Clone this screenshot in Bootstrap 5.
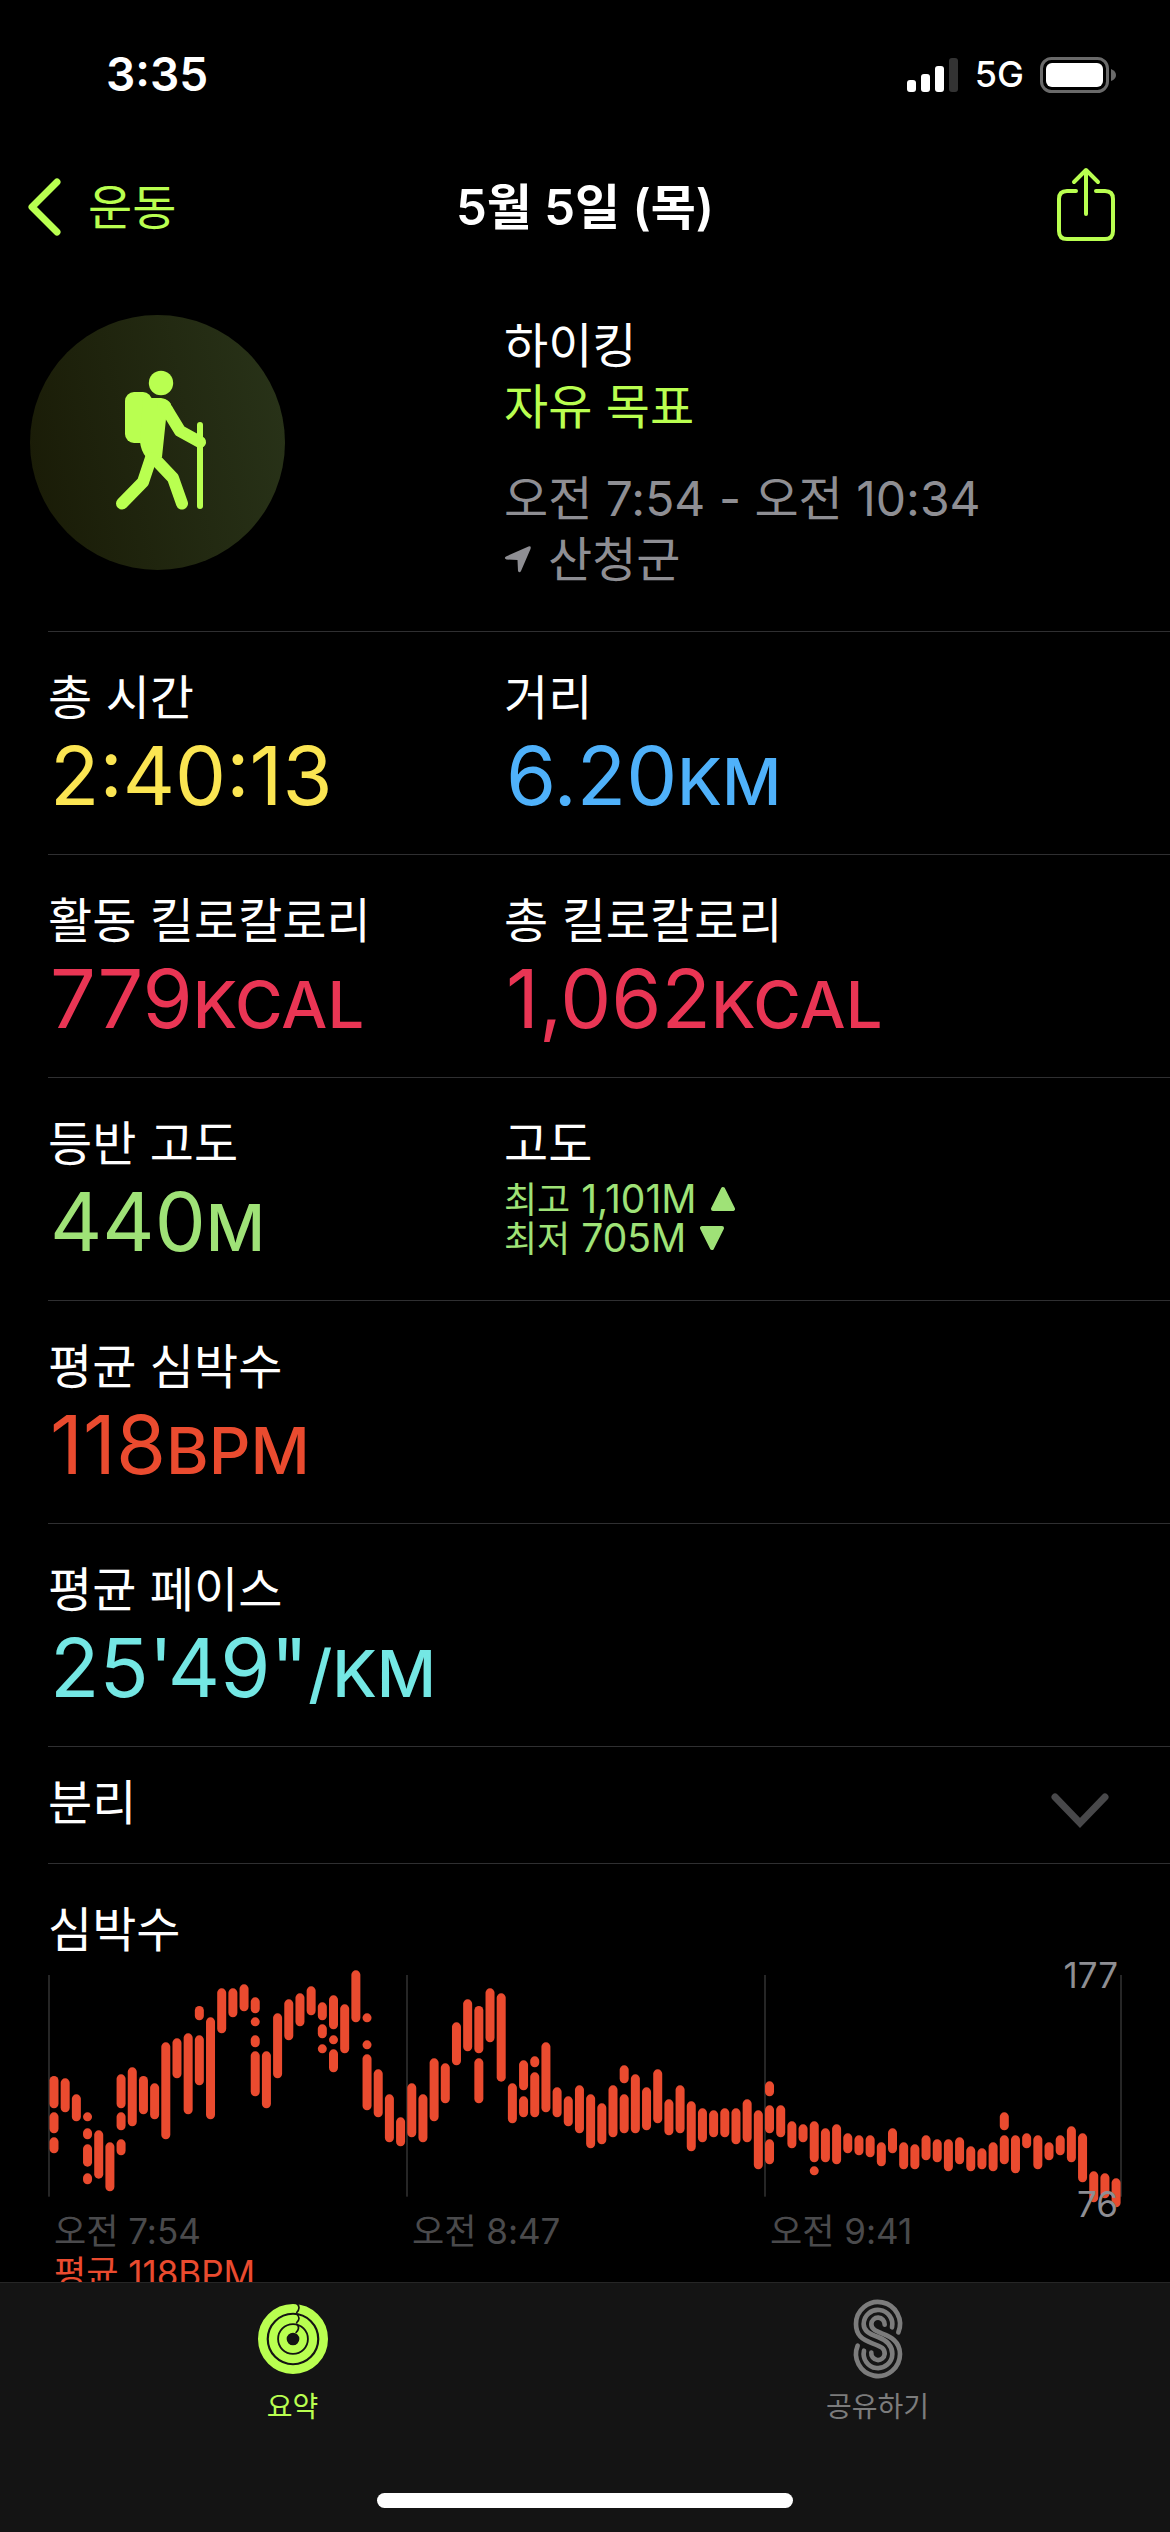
<!DOCTYPE html>
<html lang="ko" data-bs-theme="dark">
<head>
<meta charset="utf-8">
<meta name="viewport" content="width=device-width, initial-scale=1">
<title>운동 요약</title>
<link rel="stylesheet" href="https://cdn.jsdelivr.net/npm/bootstrap@5.3.0/dist/css/bootstrap.min.css">
<style>
  :root { --lime: #b9ff50; --line: #2f2f31; --dim: #8e8e93; --heart: #ea4b2f; }
  body { background: #000; color: #fff; font-family: Inter, "Noto Sans CJK KR", sans-serif; font-size: 48px; line-height: 61px; }
  svg { display: block; flex: none; }
  .lime { color: var(--lime); }
  .dim { color: var(--dim); }
  .status-bar { height: 141px; padding: 8px 54px 0 106px; }
  .clock { font-size: 46px; font-weight: 600; }
  .network { font-size: 36px; font-weight: 500; }
  .top-nav { display: grid; grid-template-columns: 1fr auto 1fr; align-items: center; height: 132px; padding: 0 26px; }
  .top-nav h1 { font-size: 49px; font-weight: 600; line-height: 61px; margin: 0; }
  .top-nav a { color: var(--lime); gap: 26px; }
  .top-nav .btn { margin: 0 27px 4px auto; }
  .summary-head { display: grid; grid-template-columns: 474px 1fr; padding: 42px 0 41px 30px; }
  .when { margin-top: 31px; }
  .place { gap: 17px; }
  .stat-row { display: grid; grid-template-columns: 456px 1fr; margin-left: 48px; border-top: 1px solid var(--line); padding: 35px 0 30px; }
  .stat-row h2, .splits, .chart-box h2 { font-size: 48px; font-weight: 400; line-height: 61px; margin: 0; }
  .figure-val { font-size: 81px; line-height: 96px; margin: 0; padding-left: 2px; }
  .figure-val span { font-size: 65px; font-weight: 500; line-height: 1; }
  .c-time { color: #fbe552; } .c-dist { color: #4fb1fa; } .c-kcal { color: #e93554; }
  .c-climb { color: #9fe277; } .c-heart { color: var(--heart); } .c-pace { color: #74e7e4; }
  .range { font-size: 39px; line-height: 39px; padding-top: 5px; }
  .range p { gap: 14px; margin: 0; }
  .range span { font-size: 36px; line-height: 1; }
  .splits-row { margin-left: 48px; border-top: 1px solid var(--line); }
  .splits { color: #fff; padding: 25px 60px 30px 0; }
  .chart-box { margin-left: 48px; border-top: 1px solid var(--line); padding: 35px 48px 238px 0; }
  .plot { margin-top: 10px; }
  .plot svg { width: 100%; height: auto; }
  .small-txt { font-size: 35px; line-height: 42px; }
  .peak, .trough { position: absolute; right: 4px; color: var(--dim); }
  .peak { top: -16px; }
  .trough { bottom: -15px; }
  .ticks { display: grid; grid-template-columns: repeat(3, 1fr); color: #4a4a4c; }
  .ticks span, .average { padding-left: 6px; }
  .tab-bar { background: #141414; border-top: 1px solid #262626; height: 250px; }
  .tab-bar a { color: #7c7c7c; font-size: 28px; line-height: 34px; padding-top: 14px; }
  .tab-bar a svg { margin-bottom: 9px; }
  .tab-bar a.lime { color: var(--lime); }
  .home-line { width: 416px; height: 15px; background: #fff; margin: 0 auto 24px; }
</style>
<script src="https://cdn.jsdelivr.net/npm/bootstrap@5.3.0/dist/js/bootstrap.bundle.min.js"></script>
</head>
<body>
<header>
  <div class="status-bar d-flex align-items-center justify-content-between">
    <span class="clock">3:35</span>
    <div class="d-flex align-items-center">
      <svg width="52" height="36" viewBox="0 0 52 36" fill="#fff"><rect y="23" width="9" height="12" rx="3"/><rect x="14" y="17" width="9" height="18" rx="3"/><rect x="28" y="9" width="9" height="26" rx="3"/><rect x="42" y="1" width="9" height="34" rx="3" fill="#333"/></svg>
      <span class="network ms-3 me-3">5G</span>
      <svg width="76" height="38" viewBox="0 0 76 38"><rect x="1.5" y="2.5" width="66" height="33" rx="10" fill="none" stroke="#6a6a6a" stroke-width="3"/><rect x="6" y="7" width="57" height="24" rx="6" fill="#fff"/><path d="M71 13q5 2 5 6t-5 6z" fill="#6a6a6a"/></svg>
    </div>
  </div>
  <nav class="top-nav" aria-label="탐색">
    <a href="#" class="d-flex align-items-center text-decoration-none">
      <svg width="36" height="60" viewBox="0 0 36 60" fill="none" stroke="currentColor" stroke-width="7" stroke-linecap="round" stroke-linejoin="round"><path d="M31 5 6 30l25 25"/></svg>
      <span>운동</span>
    </a>
    <h1>5월 5일 (목)</h1>
    <button type="button" class="btn p-0 border-0 lime" aria-label="공유">
      <svg width="62" height="76" viewBox="0 0 62 76" fill="none" stroke="currentColor" stroke-width="4" stroke-linecap="round" stroke-linejoin="round"><path d="M21 24H12q-8 0-8 8v32q0 8 8 8h38q8 0 8-8V32q0-8-8-8h-9M31 47V4M19 15 31 3l12 12"/></svg>
    </button>
  </nav>
</header>
<main>
  <section class="summary-head">
    <svg width="255" height="255" viewBox="0 0 255 255">
      <defs><linearGradient id="disc" x1="0" y1=".6" x2="1" y2=".4"><stop offset="0" stop-color="#1a1c07"/><stop offset="1" stop-color="#283218"/></linearGradient></defs>
      <circle cx="127.500" cy="127.500" r="127.500" fill="url(#disc)"/>
      <g fill="#b9ff50" stroke="#b9ff50" stroke-linecap="round" stroke-linejoin="round">
        <circle cx="131" cy="68" r="12.200" stroke="none"/>
        <rect x="95" y="77" width="27" height="51" rx="9" stroke="none"/>
        <path d="M113 83h18q7 1 10 6l-5 15-4 38-9 4-7-4q-5-6-6-15z" stroke="none"/>
        <path d="M133 90q3 2 6 8l11 18 20 11" fill="none" stroke-width="12"/>
        <path d="M121 143 113 167 92 188.500" fill="none" stroke-width="12"/>
        <path d="M124 143 143 163 152 188.500" fill="none" stroke-width="12"/>
        <path d="M170 110v81" stroke-width="6"/>
      </g>
    </svg>
    <div>
      <div>하이킹</div>
      <div class="lime">자유 목표</div>
      <div class="when dim">오전 7:54 - 오전 10:34</div>
      <div class="place dim d-flex align-items-center">
        <svg width="27" height="27" viewBox="0 0 27 27" fill="currentColor"><path d="M24.500.500Q27.500-.5 26.500 3L17 25q-1.500 2.500-3 0l-.5-11L2.500 13.500q-3-1-.5-3z"/></svg>
        <span>산청군</span>
      </div>
    </div>
  </section>

  <section class="stat-row">
    <div><h2>총 시간</h2><p class="figure-val c-time">2:40:13</p></div>
    <div><h2>거리</h2><p class="figure-val c-dist">6.20<span>KM</span></p></div>
  </section>
  <section class="stat-row">
    <div><h2>활동 킬로칼로리</h2><p class="figure-val c-kcal">779<span>KCAL</span></p></div>
    <div><h2>총 킬로칼로리</h2><p class="figure-val c-kcal">1,062<span>KCAL</span></p></div>
  </section>
  <section class="stat-row">
    <div><h2>등반 고도</h2><p class="figure-val c-climb">440<span>M</span></p></div>
    <div><h2>고도</h2>
      <div class="range c-climb">
        <p class="d-flex align-items-center"><b class="fw-normal"><span>최고</span> 1,101M</b> <svg width="24" height="26" viewBox="0 0 24 26" fill="currentColor" stroke="currentColor" stroke-width="4" stroke-linejoin="round"><path d="M12 3 22 23H2z"/></svg></p>
        <p class="d-flex align-items-center"><b class="fw-normal"><span>최저</span> 705M</b> <svg width="24" height="26" viewBox="0 0 24 26" fill="currentColor" stroke="currentColor" stroke-width="4" stroke-linejoin="round"><path d="M2 3H22L12 23z"/></svg></p>
      </div>
    </div>
  </section>
  <section class="stat-row">
    <div><h2>평균 심박수</h2><p class="figure-val c-heart">118<span>BPM</span></p></div>
  </section>
  <section class="stat-row">
    <div><h2>평균 페이스</h2><p class="figure-val c-pace">25'49"<span>/KM</span></p></div>
  </section>

  <section class="splits-row">
    <button type="button" class="splits btn border-0 rounded-0 w-100 d-flex align-items-center justify-content-between" aria-expanded="false">
      분리
      <svg class="mt-3" width="60" height="38" viewBox="0 0 60 38" fill="none" stroke="#48484a" stroke-width="7" stroke-linecap="round"><path d="M5 5 30 31 55 5"/></svg>
    </button>
  </section>

  <section class="chart-box">
    <h2>심박수</h2>
    <div class="plot position-relative">
      <svg id="heart-chart" viewBox="0 0 3222 720" role="img" aria-label="심박수 그래프"></svg>
      <span class="peak small-txt">177</span>
      <span class="trough small-txt">76</span>
    </div>
    <div class="ticks small-txt"><span>오전 7:54</span><span>오전 8:47</span><span>오전 9:41</span></div>
    <div class="average small-txt c-heart">평균 118BPM</div>
  </section>
</main>

<nav class="tab-bar fixed-bottom d-flex flex-column" aria-label="탭">
  <div class="d-flex flex-fill">
    <a href="#" class="lime d-flex flex-column align-items-center text-decoration-none w-50" aria-current="page">
      <svg width="84" height="84" viewBox="0 0 252 252" fill="none">
        <g stroke="currentColor"><circle cx="126" cy="126" r="92" stroke-width="26"/><circle cx="126" cy="126" r="60" stroke-width="25"/><circle cx="126" cy="126" r="30.500" stroke-width="23"/></g>
        <g stroke="#141414" stroke-width="5"><path d="M136 18q16 13 0 30M136 50q16 13 0 28M136 80q14 13-2 28"/></g>
      </svg>
      요약
    </a>
    <a href="#" class="d-flex flex-column align-items-center text-decoration-none w-50">
      <svg width="84" height="84" viewBox="103 82 252 252" fill="none" stroke="currentColor" stroke-width="14" stroke-linecap="round">
        <path d="M290 188A66 66 0 1 0 163 163C163 196 181 210 212 221S249 237 249 253A20 20 0 1 1 209 249"/>
        <path d="M271 173A43 43 0 1 0 186 163C186 184 202 192 229 202S272 226 272 253A43 43 0 1 1 187 243"/>
        <path d="M249 165A20 20 0 1 0 209 163C209 176 218 183 242 192S295 215 295 253A66 66 0 1 1 168 228"/>
      </svg>
      공유하기
    </a>
  </div>
  <div class="home-line rounded-pill"></div>
</nav>

<script>
  // One entry per time slice; each entry lists [top, bottom] pairs of the measured ranges.
  const slices = [
    [408,505,517,580,592,640],[415,517],[463,544],[517,544,565,598,613,680,700,733],[571,716],[607,754],
    [403,505,517,571,598,646],[382,559],[408,523],[430,538],[307,598],[295,415],[280,523],[198,241,286,436],
    [232,538],[145,280],[145,232],[133,214],[172,220,232,259,286,322,334,469],[334,505],[220,415],[178,301],
    [160,259],[139,226],[187,241,253,295,313,340],[166,268,286,313,328,397],[193,340],[91,247],
    [220,247,301,328,343,511],[388,532],[463,607],[532,619],[430,592],[463,607],[355,544],[370,490],[247,376],
    [178,334],[198,340,355,490],[145,307],[160,425],[430,550],[361,451,469,532],[349,382,397,532],[307,517],
    [442,532],[469,559],[436,580],[463,625],[490,613],[436,592],[376,430,463,580],[403,580],[442,571],[388,550],
    [478,586],[436,580],[484,634],[505,607],[511,592],[505,592],[505,613],[478,607],[511,688],
    [424,469,496,580,598,673],[496,592],[544,625],[553,607],[544,667,679,706],[565,667],[553,673],[580,640],
    [586,646],[586,652],[607,679],[565,640],[607,688],[613,688],[586,661],[598,667],[598,694],[592,673],
    [619,694],[625,688],[607,694],[517,571,586,673],[586,700],[580,625],[586,688],[607,661],[586,646],
    [559,667],[580,727],[694,787],[700,775],[715,802]
  ];
  const top0 = 90, step = 33.54, barW = 27;
  let marks = '';
  for (const x of [0, 1074, 2148, 3216]) marks += `<rect x="${x}" y="15" width="6" height="665" fill="#262626"/>`;
  slices.forEach((pairs, i) => {
    for (let k = 0; k < pairs.length; k += 2) {
      marks += `<rect x="${4.5 + i * step}" y="${pairs[k] - top0}" width="${barW}" height="${pairs[k + 1] - pairs[k]}" rx="13.5" fill="#ea4b2f"/>`;
    }
  });
  document.getElementById('heart-chart').innerHTML = marks;
</script>
</body>
</html>
